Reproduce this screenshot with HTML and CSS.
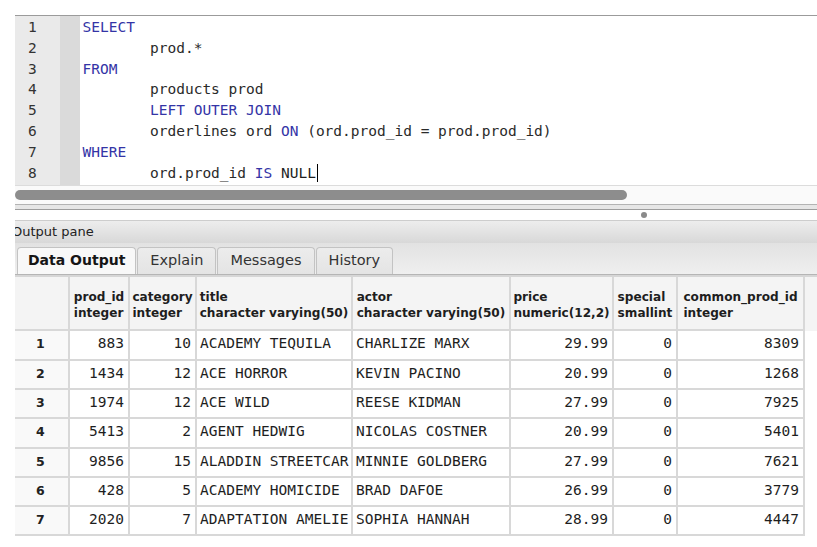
FILE: index.html
```html
<!DOCTYPE html>
<html>
<head>
<meta charset="utf-8">
<title>Query</title>
<link rel="stylesheet" href="styles.css">
</head>
<body>
<div class="app">
  <div class="editor">
    <div class="gutter">
      <div>1</div><div>2</div><div>3</div><div>4</div><div>5</div><div>6</div><div>7</div><div>8</div>
    </div>
    <div class="strip"></div>
    <div class="code">
      <div class="ln"><span class="kw">SELECT</span></div>
      <div class="ln ind">prod.*</div>
      <div class="ln"><span class="kw">FROM</span></div>
      <div class="ln ind">products prod</div>
      <div class="ln ind"><span class="kw">LEFT OUTER JOIN</span></div>
      <div class="ln ind">orderlines ord <span class="kw">ON</span> (ord.prod_id = prod.prod_id)</div>
      <div class="ln"><span class="kw">WHERE</span></div>
      <div class="ln ind">ord.prod_id <span class="kw">IS</span> <span class="plain">NULL</span><span class="caret"></span></div>
    </div>
  </div>
  <div class="hscroll"><div class="thumb"></div></div>
  <div class="splitter">
    <div class="sash"></div>
    <div class="grip"><span class="dot"></span></div>
  </div>
  <div class="pane-title"><span class="pane-label">Output pane</span></div>
  <div class="tabs">
    <div class="tab active">Data Output</div>
    <div class="tab">Explain</div>
    <div class="tab">Messages</div>
    <div class="tab">History</div>
  </div>
  <table class="grid">
    <colgroup>
      <col class="c-rh"><col class="c-id"><col class="c-cat"><col class="c-title"><col class="c-actor"><col class="c-price"><col class="c-special"><col class="c-common"><col class="c-fill">
    </colgroup>
    <thead>
      <tr>
        <th class="rh"></th>
        <th><div class="hd">prod_id<br>integer</div></th>
        <th><div class="hd">category<br>integer</div></th>
        <th><div class="hd">title<br>character varying(50)</div></th>
        <th><div class="hd">actor<br>character varying(50)</div></th>
        <th><div class="hd">price<br>numeric(12,2)</div></th>
        <th><div class="hd">special<br>smallint</div></th>
        <th><div class="hd">common_prod_id<br>integer</div></th>
        <th class="fill"></th>
      </tr>
    </thead>
    <tbody>
      <tr><td class="rh">1</td><td class="num">883</td><td class="num">10</td><td>ACADEMY TEQUILA</td><td>CHARLIZE MARX</td><td class="num">29.99</td><td class="num">0</td><td class="num">8309</td><td class="fill"></td></tr>
      <tr><td class="rh">2</td><td class="num">1434</td><td class="num">12</td><td>ACE HORROR</td><td>KEVIN PACINO</td><td class="num">20.99</td><td class="num">0</td><td class="num">1268</td><td class="fill"></td></tr>
      <tr><td class="rh">3</td><td class="num">1974</td><td class="num">12</td><td>ACE WILD</td><td>REESE KIDMAN</td><td class="num">27.99</td><td class="num">0</td><td class="num">7925</td><td class="fill"></td></tr>
      <tr><td class="rh">4</td><td class="num">5413</td><td class="num">2</td><td>AGENT HEDWIG</td><td>NICOLAS COSTNER</td><td class="num">20.99</td><td class="num">0</td><td class="num">5401</td><td class="fill"></td></tr>
      <tr><td class="rh">5</td><td class="num">9856</td><td class="num">15</td><td>ALADDIN STREETCAR</td><td>MINNIE GOLDBERG</td><td class="num">27.99</td><td class="num">0</td><td class="num">7621</td><td class="fill"></td></tr>
      <tr><td class="rh">6</td><td class="num">428</td><td class="num">5</td><td>ACADEMY HOMICIDE</td><td>BRAD DAFOE</td><td class="num">26.99</td><td class="num">0</td><td class="num">3779</td><td class="fill"></td></tr>
      <tr><td class="rh">7</td><td class="num">2020</td><td class="num">7</td><td>ADAPTATION AMELIE</td><td>SOPHIA HANNAH</td><td class="num">28.99</td><td class="num">0</td><td class="num">4447</td><td class="fill"></td></tr>
    </tbody>
  </table>
</div>
</body>
</html>
```

FILE: styles.css
```css
* { box-sizing: border-box; }
html, body { margin: 0; padding: 0; background: #fff; }
body { width: 817px; height: 547px; overflow: hidden; }

.app { padding: 15px 0 0 15px; }

/* SQL editor */
.editor {
  display: flex;
  border-top: 1px solid #9b9b9b;
  border-bottom: 1px solid #dcdcdc;
}
.gutter {
  width: 45px;
  background: #eaeaea;
  padding: 1px 0 1px 13px;
  font: 14.5px/20.83px "DejaVu Sans Mono", monospace;
  color: #333;
}
.strip { width: 20px; background: #dadada; }
.code {
  flex: 1;
  padding: 1px 0 1px 2.5px;
  font: 14.5px/20.83px "DejaVu Sans Mono", monospace;
  color: #2a2a2a;
}
.ln { white-space: pre; height: 20.83px; }
.ind { padding-left: 67.5px; }
.kw { color: #3434a6; }
.plain { color: #1e1e1e; }
.caret {
  display: inline-block;
  width: 1px;
  height: 18px;
  background: #000;
  vertical-align: -4px;
  margin-left: 1px;
}

/* horizontal scrollbar */
.hscroll {
  height: 18px;
  background: #fafafa;
  padding-top: 4.5px;
}
.thumb {
  width: 612px;
  height: 10px;
  border-radius: 5px;
  background: #8d8d8d;
}

/* splitter */
.splitter { height: 16px; border-top: 1px solid #b3b3b3; }
.sash { height: 5px; background: #e6e6e6; border-bottom: 1px solid #9d9d9d; }
.grip { height: 10px; display: flex; }
.dot {
  width: 6px;
  height: 6px;
  border-radius: 50%;
  background: #8a8a8a;
  margin: 2px 0 0 626px;
}

/* output pane title */
.pane-title {
  height: 23px;
  border-top: 1px solid #cdcdcd;
  background: linear-gradient(#ededed, #d8d8d8);
  overflow: hidden;
  font: 13px/22px "DejaVu Sans", sans-serif;
  color: #222;
}
.pane-label { display: block; margin-left: -3px; }

/* tabs */
.tabs {
  height: 32px;
  display: flex;
  align-items: flex-end;
  padding-left: 2px;
  background: linear-gradient(#e2e2e2, #efefef);
  border-bottom: 1px solid #b5b5b5;
}
.tab {
  height: 27px;
  margin-right: 1px;
  padding: 0 12px;
  border: 1px solid #c3c3c3;
  border-bottom: none;
  border-radius: 4px 4px 0 0;
  background: linear-gradient(#ececec, #e4e4e4);
  font: 14.5px/25px "DejaVu Sans", sans-serif;
  color: #333;
}
.tab.active {
  padding: 0 10px;
  background: #f8f8f8;
  font-weight: bold;
  font-size: 14px;
  color: #151515;
}

/* data grid */
.grid {
  width: 802px;
  table-layout: fixed;
  border-collapse: separate;
  border-spacing: 0;
  border-top: 2px solid #d6d6d6;
}
.c-rh { width: 55px; }
.c-id { width: 60px; }
.c-cat { width: 67px; }
.c-title { width: 156px; }
.c-actor { width: 158px; }
.c-price { width: 103px; }
.c-special { width: 64px; }
.c-common { width: 127px; }
.c-fill { width: 12px; }

.grid th {
  background: #f4f4f4;
  border-right: 2px solid #d8d8d8;
  border-bottom: 2px solid #d8d8d8;
  padding: 12px 0 8.7px;
  text-align: center;
  vertical-align: top;
  font: bold 12.1px/16px "DejaVu Sans", sans-serif;
  color: #1e1e1e;
  white-space: nowrap;
  overflow: hidden;
}
.hd { display: inline-block; text-align: left; }

.grid td {
  border-right: 2px solid #d8d8d8;
  border-bottom: 2px solid #d8d8d8;
  padding: 0 0 2px 3px;
  font: 14.5px/25.3px "DejaVu Sans Mono", monospace;
  color: #1e1e1e;
  white-space: nowrap;
  overflow: hidden;
}
.grid td.num { text-align: right; padding: 0 4px 2px 0; }
.grid td.rh {
  background: #f9f9f9;
  padding-left: 21px;
  font: bold 12.5px/25.3px "DejaVu Sans", sans-serif;
  color: #222;
}
.grid th.fill { border: none; background: #f4f4f4; }
.grid td.fill { border: none; background: #fff; }
```
